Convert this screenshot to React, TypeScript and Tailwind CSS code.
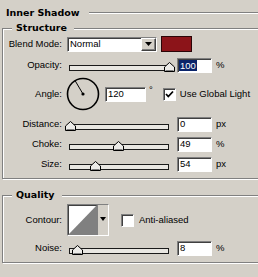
const sunken =
  "border border-t-[#808080] border-l-[#808080] border-b-white border-r-white shadow-[inset_1px_1px_0_#404040]";
const raised =
  "border border-t-white border-l-white border-b-[#404040] border-r-[#404040] shadow-[inset_-1px_-1px_0_#808080]";

function Group({ title, className, children }: { title: string; className?: string; children: React.ReactNode }) {
  return (
    <fieldset
      className={
        "ml-[2px] w-[300px] border border-[#808080] shadow-[inset_1px_1px_0_#fff,1px_1px_0_#fff] " + (className ?? "")
      }
    >
      <legend className="ml-[9px] pl-[4px] pr-[7px] bg-[#d4d0c8] font-['DejaVu_Sans',sans-serif] text-[9.5px] font-bold leading-[12px]">
        {title}
      </legend>
      {children}
    </fieldset>
  );
}

function Label({ children }: { children: React.ReactNode }) {
  return <div className="w-[59px] shrink-0 text-right">{children}</div>;
}

function Slider({ thumb }: { thumb: number }) {
  // thumb = x of the thumb centre, measured from the track's left end
  return (
    <div className="relative ml-[7px] h-[16px] w-[100px] shrink-0">
      <div className="mt-[8px] h-[6px] w-full border border-[#1a1a1a] bg-[#e9e7e2]" />
      <svg
        className="absolute top-[5px]"
        style={{ left: thumb - 5 }}
        width="11"
        height="11"
        viewBox="0 0 11 11"
      >
        <path d="M5.5 0.5 L10.5 5 L10.5 9.5 L0.5 9.5 L0.5 5 Z" fill="#ecebe8" stroke="#000" />
        <path d="M1.5 8.5 L9.5 8.5" stroke="#808080" />
      </svg>
    </div>
  );
}

function Field({ value, w = "w-[35px]", selected }: { value: string; w?: string; selected?: boolean }) {
  return (
    <div className={sunken + " ml-[8px] flex h-[15px] shrink-0 items-center bg-white " + w}>
      {selected ? (
        <span className="ml-[1px] bg-[#0a246a] px-[1px] leading-[11px] text-white">{value}</span>
      ) : (
        <span className="ml-[2px]">{value}</span>
      )}
    </div>
  );
}

function Check({ checked }: { checked?: boolean }) {
  return (
    <div className={sunken + " flex h-[13px] w-[13px] shrink-0 items-center justify-center bg-white"}>
      {checked && (
        <svg width="9" height="9" viewBox="0 0 9 9">
          <path d="M1 4 L3.3 6.5 L8 1.5" fill="none" stroke="#000" strokeWidth="1.8" />
        </svg>
      )}
    </div>
  );
}

function SliderRow({
  label,
  thumb,
  value,
  unit,
  selected,
  className,
}: {
  label: string;
  thumb: number;
  value: string;
  unit: string;
  selected?: boolean;
  className: string;
}) {
  return (
    <div className={"flex h-[16px] items-center " + className}>
      <Label>{label}</Label>
      <Slider thumb={thumb} />
      <Field value={value} selected={selected} />
      <span className="ml-[4px]">{unit}</span>
    </div>
  );
}

export default function App() {
  return (
    <div className="h-[277px] w-[258px] overflow-hidden bg-[#d4d0c8] pt-[7px] font-['Liberation_Sans',Arial,sans-serif] text-[9.5px] leading-[12px] text-black">
      <div className="flex h-[12px] items-center">
        <span className="ml-[6px] font-['DejaVu_Sans',sans-serif] text-[9.5px] font-bold">Inner Shadow</span>
        <div className="ml-[9px] h-[2px] flex-1 border-t border-t-[#808080] border-b border-b-white" />
      </div>

      <Group title="Structure" className="mt-[3px] pb-[6px]">
        <div className="mt-[2px] flex h-[16px] items-center">
          <Label>Blend Mode:</Label>
          <div className={sunken + " ml-[5px] flex h-[15px] w-[90px] shrink-0 items-center bg-white"}>
            <span className="ml-[2px] flex-1">Normal</span>
            <div className={raised + " flex h-[13px] w-[15px] items-center justify-center bg-[#d4d0c8]"}>
              <svg width="7" height="4" viewBox="0 0 7 4">
                <path d="M0 0 H7 L3.5 4 Z" fill="#000" />
              </svg>
            </div>
          </div>
          <div className="ml-[4px] h-[16px] w-[31px] border border-[#2a0507] bg-[#8c1419]" />
        </div>

        <SliderRow label="Opacity:" thumb={100} value="100" unit="%" selected className="mt-[5px]" />

        <div className="mt-[4px] flex h-[34px] items-center">
          <Label>Angle:</Label>
          <svg className="ml-[4px] shrink-0" width="34" height="34" viewBox="0 0 34 34">
            <circle cx="17" cy="17" r="15.5" fill="none" stroke="#000" strokeWidth="1.6" />
            <line x1="17" y1="17" x2="9" y2="3.5" stroke="#000" strokeWidth="1" />
            <circle cx="17" cy="17" r="1.6" fill="#000" />
          </svg>
          <Field value="120" w="w-[41px] !ml-[5px]" />
          <span className="ml-[3px] self-start pt-[7px]">°</span>
          <div className="ml-[10px]">
            <Check checked />
          </div>
          <span className="ml-[4px]">Use Global Light</span>
        </div>

        <SliderRow label="Distance:" thumb={1} value="0" unit="px" className="mt-[5px]" />
        <SliderRow label="Choke:" thumb={49} value="49" unit="%" className="mt-[4px]" />
        <SliderRow label="Size:" thumb={26} value="54" unit="px" className="mt-[4px]" />
      </Group>

      <Group title="Quality" className="mt-[10px] pb-[6px]">
        <div className="mt-[3px] flex h-[32px] items-center">
          <Label>Contour:</Label>
          <div className={sunken + " ml-[5px] flex h-[32px] w-[42px] shrink-0 bg-white"}>
            <svg className="shrink-0" width="29" height="30" viewBox="0 0 29 30" preserveAspectRatio="none">
              <path d="M0 30 L29 0 L29 30 Z" fill="#808080" />
            </svg>
            <div className="flex flex-1 justify-center border-l border-l-[#808080] bg-[#d4d0c8] pt-[12px]">
              <svg width="6" height="4" viewBox="0 0 6 4">
                <path d="M0 0 H6 L3 4 Z" fill="#000" />
              </svg>
            </div>
          </div>
          <div className="ml-[12px]">
            <Check />
          </div>
          <span className="ml-[5px]">Anti-aliased</span>
        </div>

        <SliderRow label="Noise:" thumb={8} value="8" unit="%" className="mt-[4px]" />
      </Group>
    </div>
  );
}
